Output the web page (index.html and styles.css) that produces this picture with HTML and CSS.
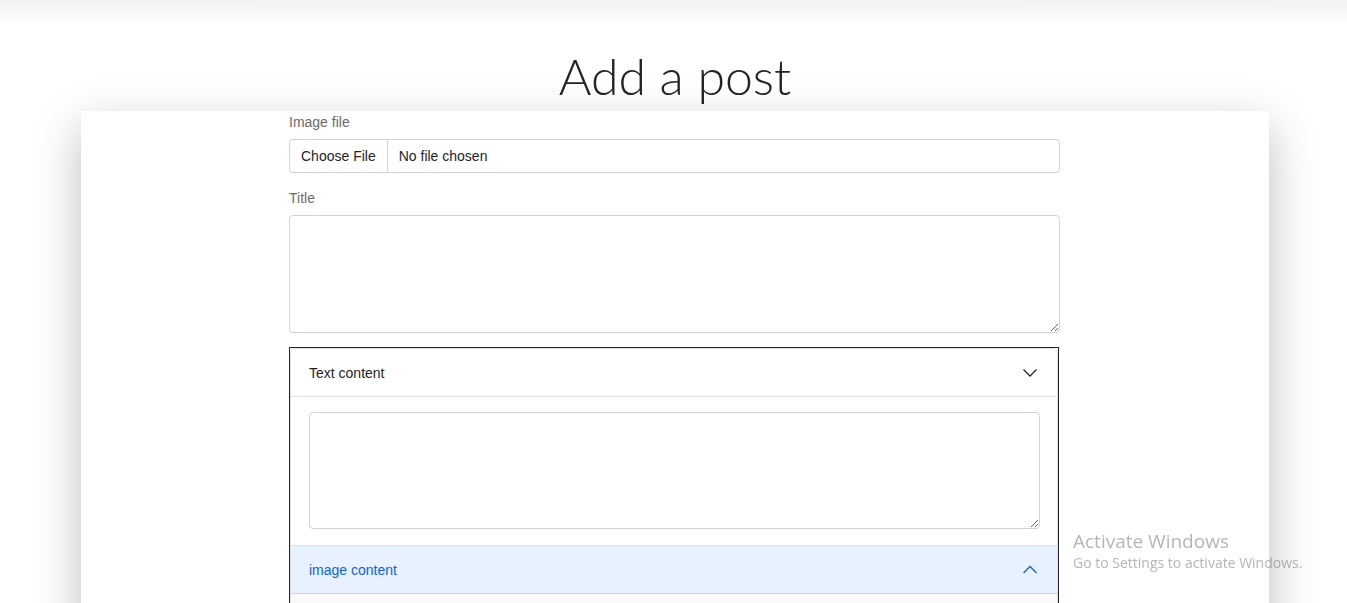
FILE: index.html
```html
<!DOCTYPE html>
<html lang="en">
<head>
<meta charset="utf-8">
<title>Add a post</title>
<link rel="stylesheet" href="styles.css">
</head>
<body>
<div class="topbar"></div>
<main class="page">
  <h1 class="page-title">Add a post</h1>
  <section class="card">
    <form class="post-form">
      <label class="field-label">Image file</label>
      <div class="file-input">
        <span class="file-btn">Choose File</span>
        <span class="file-name">No file chosen</span>
      </div>
      <label class="field-label">Title</label>
      <textarea class="textarea title-area"></textarea>
      <div class="accordion-wrap">
        <div class="acc-item">
          <div class="acc-header">
            <span>Text content</span>
            <svg class="chev" width="16" height="16" viewBox="0 0 16 16"><path d="M1.5 4.5 L8 11 L14.5 4.5" fill="none" stroke="#212529" stroke-width="1.3"/></svg>
          </div>
          <div class="acc-body">
            <textarea class="textarea body-area"></textarea>
          </div>
        </div>
        <div class="acc-item acc-item-open">
          <div class="acc-header acc-header-active">
            <span>image content</span>
            <svg class="chev" width="16" height="16" viewBox="0 0 16 16"><path d="M1.5 11 L8 4.5 L14.5 11" fill="none" stroke="#0c63e4" stroke-width="1.3"/></svg>
          </div>
          <div class="acc-body acc-body-rest"></div>
        </div>
      </div>
    </form>
  </section>
</main>
<div class="watermark">
  <div class="wm-title">Activate Windows</div>
  <div class="wm-sub">Go to Settings to activate Windows.</div>
</div>
</body>
</html>
```

FILE: styles.css
```css
* { box-sizing: border-box; }
html, body { margin: 0; padding: 0; background: #fff; overflow: hidden; height: 603px; }
body { font-family: "Liberation Sans", Arial, sans-serif; font-size: 14px; color: #212529; }
.topbar { height: 26px; background: linear-gradient(#f3f3f3, #fafafa 60%, #fff); }
.page { display: flex; flex-direction: column; align-items: center; padding-left: 3px; }
.page-title {
  margin: 18px 0 0;
  height: 67px;
  font-family: Lato, "Open Sans", sans-serif;
  font-weight: 300;
  font-size: 50px;
  line-height: 64px;
  letter-spacing: 0;
  color: #212529;
}
.card {
  width: 1188px;
  height: 600px;
  background: #fff;
  box-shadow: 0 16px 44px rgba(0, 0, 0, 0.26);
  display: flex;
  justify-content: center;
  padding-right: 1px;
}
.post-form { width: 771px; display: flex; flex-direction: column; padding-top: 1px; }
.field-label { color: #6e6a66; line-height: 20px; margin-bottom: 7px; }
.file-input {
  display: flex; height: 34px; border: 1px solid #ced4da; border-radius: 4px;
  margin-bottom: 15px; align-items: stretch;
}
.file-btn { padding: 0 11px; border-right: 1px solid #ced4da; display: flex; align-items: center; }
.file-name { padding: 0 11px; display: flex; align-items: center; }
.textarea {
  display: block; border: 1px solid #ced4da; border-radius: 4px; resize: vertical;
  font-family: inherit; font-size: 14px; padding: 6px 12px; outline: none; background: #fff;
}
.title-area { width: 771px; height: 118px; margin-bottom: 14px; }
.accordion-wrap { border: 1px solid #212529; border-bottom: none; width: 770px; }
.acc-item { border: 1px solid #dee2e6; border-bottom: none; border-radius: 5px 5px 0 0; }
.acc-item-open { border-radius: 0; }
.acc-header {
  height: 48px; display: flex; align-items: center; justify-content: space-between;
  padding: 0 19px 0 18px; border-bottom: 1px solid #dee2e6; border-radius: 5px 5px 0 0;
}
.acc-header-active { background: #e7f1ff; color: #0c63e4; border-radius: 0; border-bottom-color: #c9d6e6; }
.acc-body { padding: 15px 17px 16px 18px; }
.body-area { width: 731px; height: 117px; }
.acc-body-rest { background: #fafafa; height: 20px; }
.watermark {
  position: fixed; left: 1073px; top: 529px; color: rgba(120, 120, 120, 0.55);
  font-family: "Open Sans", "Noto Sans", sans-serif;
}
.wm-title { font-size: 19px; line-height: 24px; }
.wm-sub { font-size: 14px; line-height: 20px; }
```
